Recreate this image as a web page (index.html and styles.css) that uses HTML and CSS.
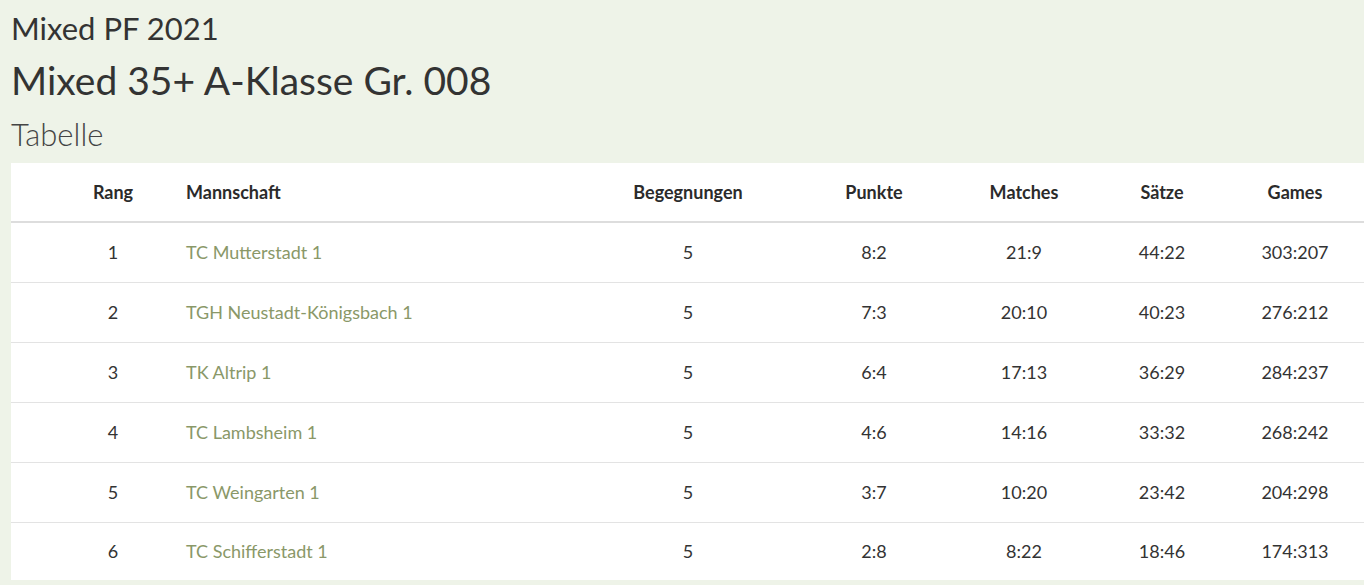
FILE: index.html
```html
<!DOCTYPE html>
<html>
  <head>
    <meta charset="utf-8" />
    <title>Mixed 35+ A-Klasse Gr. 008 - Tabelle</title>
    <link rel="stylesheet" href="styles.css">
  </head>
  <body>
    <div class="page">
      <h2 class="season">Mixed PF 2021</h2>
      <h1 class="league">Mixed 35+ A-Klasse Gr. 008</h1>
      <h3 class="section">Tabelle</h3>

      <table class="standings">
        <thead>
          <tr>
            <th class="col-rank">Rang</th>
            <th class="col-team">Mannschaft</th>
            <th class="col-meet">Begegnungen</th>
            <th class="col-pts">Punkte</th>
            <th class="col-match">Matches</th>
            <th class="col-sets">Sätze</th>
            <th class="col-games">Games</th>
          </tr>
        </thead>
        <tbody>
          <tr>
            <td class="col-rank">1</td>
            <td class="col-team"><a href="#">TC Mutterstadt 1</a></td>
            <td class="col-meet">5</td>
            <td class="col-pts">8:2</td>
            <td class="col-match">21:9</td>
            <td class="col-sets">44:22</td>
            <td class="col-games">303:207</td>
          </tr>
          <tr>
            <td class="col-rank">2</td>
            <td class="col-team"><a href="#">TGH Neustadt-Königsbach 1</a></td>
            <td class="col-meet">5</td>
            <td class="col-pts">7:3</td>
            <td class="col-match">20:10</td>
            <td class="col-sets">40:23</td>
            <td class="col-games">276:212</td>
          </tr>
          <tr>
            <td class="col-rank">3</td>
            <td class="col-team"><a href="#">TK Altrip 1</a></td>
            <td class="col-meet">5</td>
            <td class="col-pts">6:4</td>
            <td class="col-match">17:13</td>
            <td class="col-sets">36:29</td>
            <td class="col-games">284:237</td>
          </tr>
          <tr>
            <td class="col-rank">4</td>
            <td class="col-team"><a href="#">TC Lambsheim 1</a></td>
            <td class="col-meet">5</td>
            <td class="col-pts">4:6</td>
            <td class="col-match">14:16</td>
            <td class="col-sets">33:32</td>
            <td class="col-games">268:242</td>
          </tr>
          <tr>
            <td class="col-rank">5</td>
            <td class="col-team"><a href="#">TC Weingarten 1</a></td>
            <td class="col-meet">5</td>
            <td class="col-pts">3:7</td>
            <td class="col-match">10:20</td>
            <td class="col-sets">23:42</td>
            <td class="col-games">204:298</td>
          </tr>
          <tr>
            <td class="col-rank">6</td>
            <td class="col-team"><a href="#">TC Schifferstadt 1</a></td>
            <td class="col-meet">5</td>
            <td class="col-pts">2:8</td>
            <td class="col-match">8:22</td>
            <td class="col-sets">18:46</td>
            <td class="col-games">174:313</td>
          </tr>
        </tbody>
      </table>
    </div>
  </body>
</html>
```

FILE: styles.css
```css
* {
  margin: 0;
  padding: 0;
  box-sizing: border-box;
}

body {
  font-family: Lato, "Liberation Sans", sans-serif;
  background-color: #eef3e8;
  color: #333333;
  overflow: hidden;
}

.page {
  padding: 10px 0 0 11px;
}

.season {
  font-size: 31px;
  font-weight: 400;
  line-height: 36px;
}

.league {
  font-size: 39px;
  font-weight: 400;
  line-height: 46px;
  margin-top: 11px;
}

.section {
  font-size: 31px;
  font-weight: 300;
  line-height: 36px;
  margin-top: 13px;
  color: #444444;
}

.standings {
  margin-top: 11px;
  width: 1353px;
  border-collapse: collapse;
  background-color: #ffffff;
  font-size: 18px;
  table-layout: fixed;
}

.standings th {
  height: 59px;
  font-weight: 700;
  color: #2b2b2b;
  border-bottom: 2px solid #dddddd;
}

.standings td {
  height: 60px;
  border-bottom: 1px solid #e3e3e3;
}

.standings tbody tr:last-child td {
  border-bottom: none;
  height: 58px;
}

.standings a {
  color: #8a9868;
  text-decoration: none;
}

.col-rank {
  width: 163px;
  padding-left: 41px;
  text-align: center;
}

.col-team {
  width: 426px;
  padding-left: 12px;
  text-align: left;
}

.col-meet {
  width: 176px;
  text-align: center;
}

.col-pts {
  width: 196px;
  text-align: center;
}

.col-match {
  width: 104px;
  text-align: center;
}

.col-sets {
  width: 172px;
  text-align: center;
}

.col-games {
  width: 116px;
  padding-right: 22px;
  text-align: center;
}
```
